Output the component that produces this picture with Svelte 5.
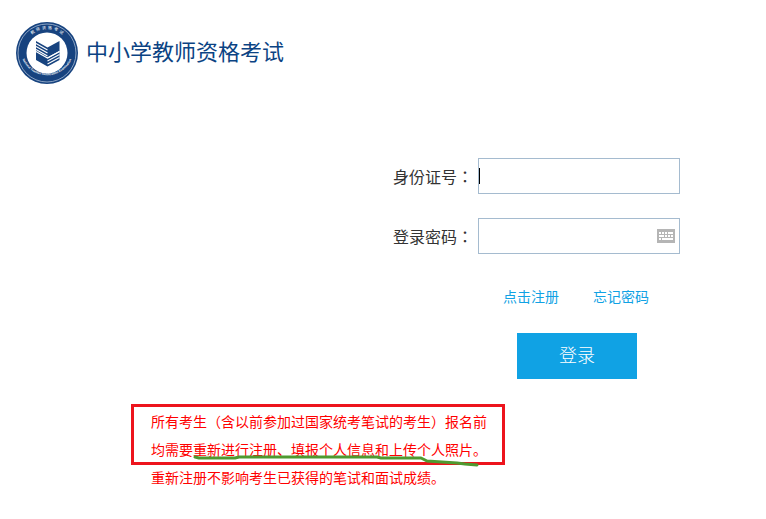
<script>
  let idNumber = $state('');
  let password = $state('');
  const stripes = [0, 3, 6];
</script>

<div class="page">
  <header>
    <svg class="logo" viewBox="0 0 62 62" role="img" aria-label="中小学教师资格考试">
      <defs>
        <path id="arc-top" d="M7 31a24 24 0 0 1 48 0" />
        <path id="arc-bottom" d="M4.5 29a26.6 26.6 0 0 0 53 0" />
      </defs>
      <circle cx="31" cy="31" r="31" fill="#17437f" />
      <circle cx="31" cy="31" r="29" fill="none" stroke="#a9bdd6" stroke-width=".8" />
      <circle cx="31" cy="31" r="20.5" fill="#fff" />
      <text class="seal-cn"><textPath href="#arc-top" startOffset="50%" text-anchor="middle">教&#160;&#160;师&#160;&#160;资&#160;&#160;格&#160;&#160;考&#160;&#160;试</textPath></text>
      <text class="seal-en"><textPath href="#arc-bottom" startOffset="50%" text-anchor="middle">National Teacher Certification Examination</textPath></text>
      <path fill="#17437f" d="M20 19l11.5 6.500v19l-11.500-6.500zM43.500 19l-12 6.500v19l12-6.500z" />
      <g stroke="#fff" stroke-width="1.1" fill="none">
        {#each stripes as y}
          <path d="M20 {21.500 + y}l11.500 6.500M31.500 {36 + y}l12 -6.500" />
        {/each}
        <path d="M20 29.500l11.500 6.500l12 -6.500" />
      </g>
    </svg>
    <h1>中小学教师资格考试</h1>
  </header>

  <main>
    <form onsubmit={(e) => e.preventDefault()}>
      <div class="row">
        <label for="id-number">身份证号：</label>
        <div class="field">
          <input id="id-number" type="text" bind:value={idNumber} />
          <span class="caret"></span>
        </div>
      </div>
      <div class="row">
        <label for="password">登录密码：</label>
        <div class="field">
          <input id="password" type="password" bind:value={password} />
          <button class="keyboard" type="button" aria-label="软键盘">
            <svg viewBox="0 0 18 14" shape-rendering="crispEdges">
              <path fill="#b5b5b5" d="M0 0h18v14H0z" />
              <path fill="#fff" d="M2 3h2v2H2zM5 3h2v2H5zM8 3h2v2H8zM11 3h5v2h-5zM2 6h5v2H2zM8 6h2v2H8zM11 6h2v2h-2zM14 6h2v2h-2zM2 9h2v2H2zM5 9h11v2H5z" />
            </svg>
          </button>
        </div>
      </div>
      <nav>
        <a href="#register">点击注册</a>
        <a href="#forgot">忘记密码</a>
      </nav>
      <button class="submit" type="submit">登录</button>
    </form>

    <div class="notice">
      <p>所有考生（含以前参加过国家统考笔试的考生）报名前<br />均需要重新进行注册、填报个人信息和上传个人照片。<br />重新注册不影响考生已获得的笔试和面试成绩。</p>
      <div class="frame"></div>
      <svg class="underline" viewBox="0 0 286 12" fill="none" stroke="#4e9a30" stroke-width="3" stroke-linecap="round" stroke-linejoin="round">
        <path d="M2 2L6 3H42L46 2H184L188 3H228L234 6L264 8L272 9L284 10" />
      </svg>
    </div>
  </main>
</div>

<style>
  :global(body) {
    margin: 0;
    background: #fff;
  }
  .page {
    font-family: "Noto Sans CJK SC", "Noto Sans CJK TC", sans-serif;
    color: #333;
  }
  header {
    display: flex;
    align-items: center;
    gap: 8px;
    padding: 22px 16px 0;
  }
  .logo {
    width: 62px;
    height: 62px;
  }
  .seal-cn {
    font-size: 4px;
    fill: #fff;
  }
  .seal-en {
    font: bold 3px "Liberation Sans", sans-serif;
    fill: #fff;
  }
  h1 {
    margin: 0;
    padding-bottom: 6px;
    font-size: 22px;
    font-weight: 400;
    line-height: 32px;
    color: #0b4383;
  }
  form {
    width: max-content;
    margin: 74px 86px 0 auto;
  }
  .row {
    display: flex;
    align-items: center;
    gap: 5px;
    margin-bottom: 24px;
  }
  label {
    font-family: "Noto Sans CJK TC", sans-serif;
    font-size: 16px;
    line-height: 24px;
  }
  .field {
    position: relative;
  }
  input {
    display: block;
    box-sizing: border-box;
    width: 202px;
    height: 36px;
    padding: 0 8px;
    border: 1px solid #a5bbcf;
    background: #fff;
    font: inherit;
    outline: none;
  }
  .caret {
    position: absolute;
    left: 1px;
    top: 10px;
    width: 1px;
    height: 16px;
    background: #000;
  }
  .keyboard {
    position: absolute;
    right: 5px;
    top: 11px;
    width: 18px;
    height: 14px;
    padding: 0;
    border: 0;
    background: none;
  }
  .keyboard svg {
    display: block;
  }
  nav {
    display: flex;
    gap: 34px;
    margin: 31px 0 0 110px;
  }
  a {
    font-size: 14px;
    line-height: 22px;
    color: #10a2e4;
    text-decoration: none;
  }
  .submit {
    display: block;
    width: 120px;
    height: 46px;
    margin: 26px 0 0 124px;
    padding: 0 0 4px;
    border: 0;
    background: #10a2e4;
    color: #fff;
    font-family: inherit;
    font-size: 18px;
    font-weight: 300;
  }
  .notice {
    position: relative;
    width: max-content;
    margin: 28px 0 0 131px;
    padding: 0 20px;
  }
  p {
    margin: 0;
    font-family: "Noto Sans CJK SC", sans-serif;
    font-size: 14px;
    line-height: 28px;
    color: #f00;
  }
  .frame {
    position: absolute;
    box-sizing: border-box;
    left: 0;
    top: -3px;
    width: 374px;
    height: 61px;
    border: 3px solid #ed141d;
  }
  .underline {
    position: absolute;
    left: 62px;
    top: 48px;
    width: 286px;
    height: 12px;
  }
</style>
